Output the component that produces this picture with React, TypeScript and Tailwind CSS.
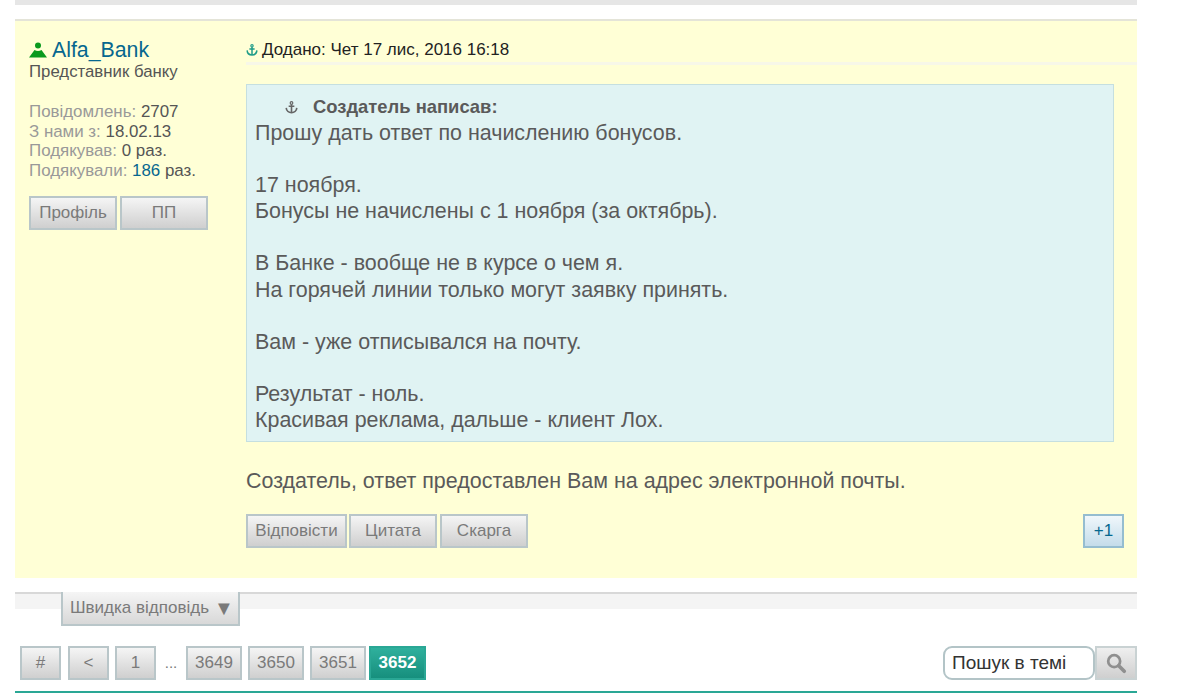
import React from "react";

const Anchor = ({ className }: { className: string }) => (
  <svg viewBox="0 0 16 16" className={className} fill="none" stroke="currentColor">
    <circle cx="8" cy="2.400" r="1.600" strokeWidth="1.500" />
    <path d="M8 4v10.500M4.500 6.500h7" strokeWidth="2" />
    <path d="M1.500 8.500c.2 3.800 3.200 6 6.500 6s6.300-2.200 6.500-6" strokeWidth="2" />
  </svg>
);

const Btn = ({ children, className = "" }: { children: React.ReactNode; className?: string }) => (
  <div
    className={`flex h-[34px] items-center justify-center border-2 border-[#b9c6c9] bg-gradient-to-b from-[#f5f5f5] to-[#cfcfcf] text-[17px] text-[#7a7a7a] ${className}`}
  >
    {children}
  </div>
);

export default function App() {
  return (
    <div className="h-[693px] w-[1186px] overflow-hidden bg-white font-['Liberation_Sans',Arial,sans-serif]">
      <div className="mx-[15px] w-[1122px]">
        <div className="h-[5px] bg-[#e6e6e6]" />
        <div className="mt-[14px] flex h-[559px] border-t-2 border-[#e4e4d8] bg-[#ffffd6]">
          <div className="w-[231px] shrink-0 pl-[14px] pt-[16px]">
            <div className="flex h-[26px] items-center text-[21.300px] leading-[26px] text-[#06678f]">
              <svg viewBox="0 0 18 16" className="mr-[5px] h-[16px] w-[18px] text-[#0a9a1e]" fill="currentColor">
                <circle cx="9" cy="3.500" r="3" />
                <path d="M0 15.500 5.500 8c2 1.200 5 1.200 7 0l5.500 7.500z" />
              </svg>
              Alfa_Bank
            </div>
            <div className="mt-[-1px] text-[16.800px] leading-[20px] text-[#555]">Представник банку</div>
            <div className="mt-[20px] text-[16.900px] leading-[19.700px] text-[#555]">
              <div>
                <span className="text-[#999]">Повідомлень:</span> 2707
              </div>
              <div>
                <span className="text-[#999]">З нами з:</span> 18.02.13
              </div>
              <div>
                <span className="text-[#999]">Подякував:</span> 0 раз.
              </div>
              <div>
                <span className="text-[#999]">Подякували:</span> <span className="text-[#06678f]">186</span> раз.
              </div>
            </div>
            <div className="mt-[15px] flex gap-[3px]">
              <Btn className="w-[88px]">Профіль</Btn>
              <Btn className="w-[88px]">ПП</Btn>
            </div>
          </div>
          <div className="min-w-0 flex-1 pt-[17px]">
            <div className="flex h-[24px] items-center text-[17px] text-[#222]">
              <Anchor className="mr-[4px] h-[14px] w-[12px] text-[#1f9c88]" />
              Додано: Чет 17 лис, 2016 16:18
            </div>
            <div className="h-[3px] bg-[#f7f7e8]" />
            <div className="mr-[23px] mt-[19px] h-[358px] border border-[#c5dfe0] bg-[#e0f3f3] px-[8px] pt-[10px] text-[21.450px] leading-[26.100px] text-[#5a5a5a]">
              <div className="flex h-[24px] items-center pl-[30px] text-[18.400px] font-bold">
                <Anchor className="mr-[15px] h-[13px] w-[13px] text-[#666]" />
                Создатель написав:
              </div>
              <div className="mt-[1px] whitespace-pre-line">
                {`Прошу дать ответ по начислению бонусов.

17 ноября.
Бонусы не начислены с 1 ноября (за октябрь).

В Банке - вообще не в курсе о чем я.
На горячей линии только могут заявку принять.

Вам - уже отписывался на почту.

Результат - ноль.
Красивая реклама, дальше - клиент Лох.`}
              </div>
            </div>
            <div className="mt-[26px] text-[21.450px] leading-[26px] text-[#5a5a5a]">
              Создатель, ответ предоставлен Вам на адрес электронной почты.
            </div>
            <div className="mr-[13px] mt-[20px] flex">
              <Btn className="mr-[2px] w-[101px]">Відповісти</Btn>
              <Btn className="mr-[3px] w-[88px]">Цитата</Btn>
              <Btn className="w-[88px]">Скарга</Btn>
              <div className="ml-auto flex h-[34px] w-[41px] items-center justify-center border-2 border-[#95bdd0] bg-gradient-to-b from-[#f0f7fb] to-[#c4dcea] text-[17px] text-[#06678f]">
                +1
              </div>
            </div>
          </div>
        </div>
        <div className="relative mt-[14px] h-[17px] border-t-2 border-[#d8d8d8] bg-[#f4f4f4]">
          <div className="absolute left-[46px] top-[-2px] flex h-[34px] w-[179px] items-center border-2 border-t-0 border-[#b9c6c9] bg-gradient-to-b from-[#f5f5f5] to-[#d8d8d8] pl-[7px] text-[17px] text-[#7a7a7a]">
            Швидка відповідь <span className="ml-[5px] text-[20px] leading-none">▼</span>
          </div>
        </div>
        <div className="mt-[37px] flex items-center pl-[5px]">
          <div className="flex items-center">
            <Btn className="mr-[7px] w-[41px]">#</Btn>
            <Btn className="mr-[6px] w-[41px]">&lt;</Btn>
            <Btn className="w-[41px]">1</Btn>
            <span className="w-[30px] text-center text-[15px] text-[#777]">...</span>
            <Btn className="mr-[6px] w-[56px]">3649</Btn>
            <Btn className="mr-[6px] w-[56px]">3650</Btn>
            <Btn className="mr-[3px] w-[56px]">3651</Btn>
            <div className="flex h-[34px] w-[57px] items-center justify-center border-2 border-[#2aa795] bg-gradient-to-b from-[#2fb09d] to-[#168f7d] text-[17px] font-bold text-white">
              3652
            </div>
          </div>
          <div className="ml-auto flex items-center">
            <div className="flex h-[34px] w-[152px] items-center rounded-[9px] border-2 border-[#b3c4c7] bg-white pl-[7px] text-[19px] text-[#333]">
              Пошук в темі
            </div>
            <div className="flex h-[34px] w-[42px] items-center justify-center border-2 border-[#c9d2d3] bg-gradient-to-b from-[#efefef] to-[#cfcfcf]">
              <svg viewBox="0 0 24 24" className="h-[22px] w-[22px] text-[#8f8f8f]" fill="none" stroke="currentColor">
                <circle cx="10" cy="10" r="6.500" strokeWidth="3" />
                <path d="M15 15l6 6" strokeWidth="4" strokeLinecap="round" />
              </svg>
            </div>
          </div>
        </div>
        <div className="mt-[11px] h-[2px] bg-[#2aa795]" />
      </div>
    </div>
  );
}
